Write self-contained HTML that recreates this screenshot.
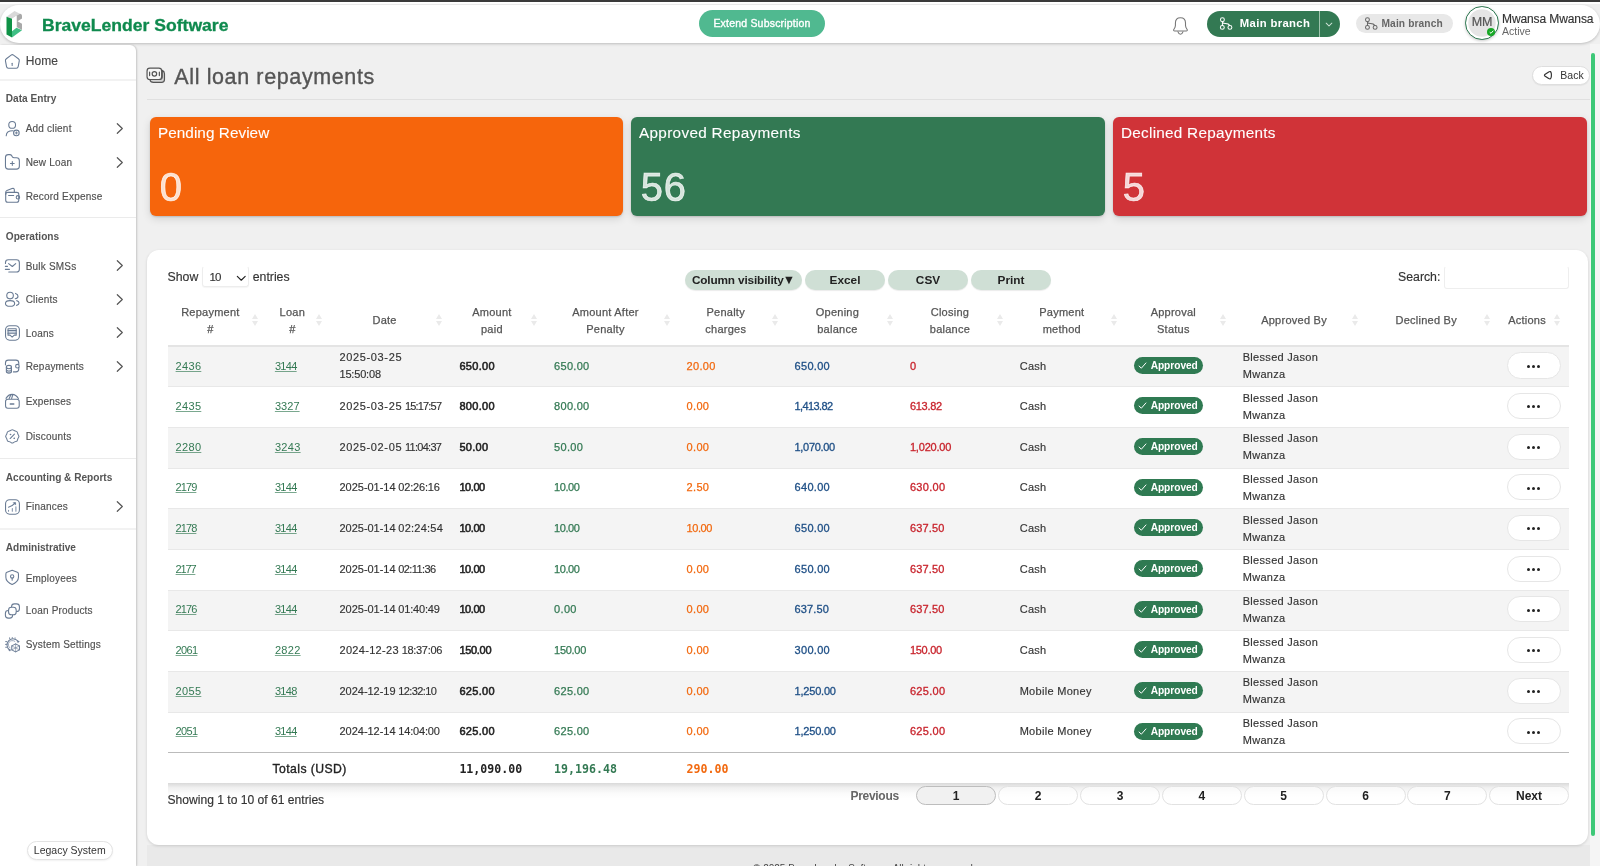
<!DOCTYPE html>
<html lang="en">
<head>
<meta charset="utf-8">
<title>All loan repayments - BraveLender Software</title>
<style>
*{box-sizing:border-box}
html,body{margin:0;padding:0}
body{width:1600px;height:866px;overflow:hidden;position:relative;background:#f0f0f0;font-family:"Liberation Sans",sans-serif;color:#333;font-size:11px}
#app{position:absolute;left:0;top:0;width:1600px;height:866px;overflow:hidden;will-change:transform}
.abs,.ic,.mi,.mh,.md{position:absolute}
#topbar{position:absolute;left:0;top:0;width:1600px;height:2px;background:#3a3a3a}
#topw{position:absolute;left:0;top:2px;width:1600px;height:2px;background:#fff}
#hdr{position:absolute;left:0;top:5px;width:1600px;height:38px;background:#fff;border-radius:19px;box-shadow:0 1px 3px rgba(0,0,0,.22)}
#brand{position:absolute;left:41.500px;top:6.200px;line-height:28px;font-size:16.200px;font-weight:bold;color:#0f8a4e;letter-spacing:0;white-space:nowrap;transform:scaleX(1.085);transform-origin:0 50%;-webkit-text-stroke:.3px #0f8a4e}
#ext{position:absolute;left:699px;top:5px;width:126px;height:27px;border-radius:14px;background:#50b990;color:#fff;font-size:10.500px;text-align:center;line-height:27px;letter-spacing:.2px;-webkit-text-stroke:.35px #fff}
#mb{position:absolute;left:1207px;top:6px;width:133px;height:26px;border-radius:13px;background:#337953;color:#fff;font-size:12px;font-weight:bold;line-height:26px;white-space:nowrap}
#mb b{position:absolute;left:32.800px;top:-.6px;font-weight:bold;font-size:11.300px;letter-spacing:.35px}
#mb s{position:absolute;left:112px;top:0;width:1px;height:26px;background:#9fc4ad}
#mb2{position:absolute;left:1356px;top:9px;width:97px;height:19px;border-radius:10px;background:#e8e8e8;color:#666;font-size:11px;font-weight:bold;line-height:19px;white-space:nowrap}
#mb2 b{position:absolute;left:25.500px;top:.3px;font-size:10.200px;letter-spacing:.12px}
#av{position:absolute;left:1465.200px;top:1.100px;width:33.800px;height:33.800px;border-radius:50%;border:1.700px solid #2f7a52;background:#e5e5e5;color:#555;font-size:12.500px;text-align:center;line-height:30px;-webkit-text-stroke:.2px #555;box-shadow:0 1px 3px rgba(0,0,0,.2),inset 0 0 0 2.300px #fff}
#avd{position:absolute;left:1487px;top:23px;width:8px;height:8px;border-radius:50%;background:#17a825}
#un{position:absolute;left:1502px;top:7px;font-size:12px;line-height:14px;color:#333;white-space:nowrap;letter-spacing:-.1px;-webkit-text-stroke:.15px #333}
#ua{position:absolute;left:1502px;top:20px;font-size:10.500px;line-height:12px;color:#666}
#side{position:absolute;left:0;top:45px;width:136px;height:821px;background:#fff;border-top-right-radius:6px;box-shadow:1px 0 2px rgba(0,0,0,.18)}
#side .ic{margin-top:-45px}
.mi{left:25.700px;height:20px;line-height:20px;font-size:10px;color:#505050;white-space:nowrap;margin-top:-45px;letter-spacing:.2px;-webkit-text-stroke:.15px #505050}
.mi.home{font-size:12px;color:#444;letter-spacing:.1px}
.mh{left:5.800px;height:20px;line-height:20px;font-size:10.100px;font-weight:bold;color:#555;white-space:nowrap;margin-top:-45px;letter-spacing:0}
.md{left:0;width:136px;height:1px;background:#ebebeb;margin-top:-45px}
.md.t{height:2px;background:#f2f2f2}
#legacy{position:absolute;left:27px;top:795.500px;width:85.500px;height:19px;border:1px solid #e3e3e3;border-radius:11px;background:#fff;font-size:10.500px;color:#333;text-align:center;line-height:17px;box-shadow:0 1px 2px rgba(0,0,0,.06)}
#title{position:absolute;left:174.300px;top:62.700px;font-size:21.500px;line-height:28px;color:#555;white-space:nowrap;letter-spacing:.62px;-webkit-text-stroke:.35px #555}
#back{position:absolute;left:1532.300px;top:65.700px;width:58px;height:19.800px;border-radius:10px;background:#fff;border:1px solid #dedede;font-size:10.500px;color:#333;line-height:17px;box-shadow:0 1px 1px rgba(0,0,0,.05)}
#back b{position:absolute;left:27px;font-weight:normal}
#hr{position:absolute;left:147px;top:99px;width:1443px;height:1px;background:#e0e0e0}
.card{position:absolute;top:116.700px;height:99.700px;border-radius:6px;color:#fff;box-shadow:0 1px 2px rgba(0,0,0,.15),0 3px 8px rgba(0,0,0,.12)}
.card h4{position:absolute;left:8px;top:6.600px;margin:0;font-weight:normal;font-size:15.300px;line-height:20px;white-space:nowrap;letter-spacing:.05px;-webkit-text-stroke:.1px #fff}
.card p{position:absolute;left:9.700px;top:47.300px;margin:0;font-size:40px;line-height:46px;color:rgba(255,255,255,.8);letter-spacing:.8px;-webkit-text-stroke:.7px rgba(255,255,255,.8)}
#tc{position:absolute;left:147.300px;top:250px;width:1441.100px;height:595px;background:#fff;border-radius:12px;box-shadow:0 1px 3px rgba(0,0,0,.14)}
#fband{position:absolute;left:147.300px;top:845px;width:1442.500px;height:21px;background:#e9e9e9}
#len{position:absolute;left:167.500px;top:267px;-webkit-text-stroke:.15px;font-size:12.300px;line-height:21px;color:#333;white-space:nowrap}
#sel{position:absolute;left:202px;top:266.200px;width:47px;height:21.300px;border:1px solid #ededed;border-top-color:transparent;border-radius:3px;box-shadow:0 1px 1px rgba(0,0,0,.04)}
#sel b{position:absolute;left:6.500px;top:0;line-height:21px;font-weight:normal;font-size:11.500px;letter-spacing:-.8px;-webkit-text-stroke:.15px}
.btn{position:absolute;top:270px;height:19.500px;border-radius:10px;background:#cfdfd5;color:#222;font-weight:bold;font-size:11.800px;line-height:21px;text-align:center;white-space:nowrap;box-shadow:0 1px 1px rgba(0,0,0,.08)}
#sl{position:absolute;left:1398px;top:267px;-webkit-text-stroke:.15px;font-size:12.300px;line-height:21px;color:#333}
#si{position:absolute;left:1443.500px;top:265.700px;width:125.500px;height:23px;border:1px solid #eee;border-top-color:#fff;border-radius:3px;background:#fff}
table{position:absolute;left:167.6px;top:296px;width:1401.2px;border-collapse:collapse;table-layout:fixed;font-size:11px}
th{height:50px;padding:0 18px 0 4.3px;font-weight:normal;color:#555;-webkit-text-stroke:.25px #555;text-align:center;line-height:16.500px;position:relative;border-bottom:2px solid #e4e4e4;font-size:11px;letter-spacing:.25px}
th i{position:absolute;right:9px;top:17.500px;width:6px;height:13px}
th i:before{content:"";position:absolute;left:0;top:0;border:3px solid transparent;border-bottom:5px solid #eaeaea;border-top:0}
th i:after{content:"";position:absolute;left:0;top:7.500px;border:3px solid transparent;border-top:5px solid #eaeaea;border-bottom:0}
td{height:40.680px;padding:0 8px 1px;line-height:16.800px;color:#333;-webkit-text-stroke:.15px;border-bottom:1px solid #e8e8e8;white-space:nowrap;letter-spacing:.3px}
td.d{letter-spacing:-.3px}
tbody tr:nth-child(odd) td{background:#f4f4f4}
tbody tr:last-child td{border-bottom:1px solid #bbb}
td a{-webkit-text-stroke:0;color:#337953;text-decoration:underline;text-decoration-color:rgba(51,121,83,.65);letter-spacing:.1px}
td.b{color:#222;-webkit-text-stroke:.55px #222}
td.g{color:#337953;-webkit-text-stroke:.25px}td.o{color:#f2690f;-webkit-text-stroke:.25px}td.bl{color:#1e4f86;-webkit-text-stroke:.3px}td.r{color:#c8232c;-webkit-text-stroke:.3px}
.bdg{display:inline-block;height:17px;line-height:17px;border-radius:9px;background:#2f7a52;color:#fff;font-weight:bold;font-size:10.200px;padding:0 5px 0 4.500px;letter-spacing:-.05px;position:relative;top:-.8px;-webkit-text-stroke:0}
.bdg svg{margin-right:3.500px;vertical-align:-1px}
.act{display:block;width:53.500px;height:26.200px;margin-top:-1px;border:1px solid #e6e6e6;border-radius:14px;background:#fff;text-align:center;line-height:0;padding-top:10.500px}
.act u{display:inline-block;width:3.200px;height:3.200px;border-radius:50%;background:#222;margin:0 .9px}
tfoot td{height:30.400px;border-bottom:0;font-weight:bold;font-size:12px;color:#222;letter-spacing:.1px;padding-top:3px;-webkit-text-stroke:0}
tfoot td.m{font-family:"DejaVu Sans Mono","Liberation Mono",monospace;font-size:11.600px;letter-spacing:0;-webkit-text-stroke:0}
#tshadow{position:absolute;left:167.600px;top:783px;width:1401.200px;height:16px;background:linear-gradient(rgba(0,0,0,.15),rgba(0,0,0,.06) 30%,rgba(0,0,0,.015) 65%,rgba(0,0,0,0))}
#info{position:absolute;left:167.500px;top:790px;-webkit-text-stroke:.15px;font-size:12.100px;line-height:20px;color:#333;white-space:nowrap;letter-spacing:0}
#prev{position:absolute;left:850.500px;top:785.500px;font-size:12px;line-height:20px;color:#666;font-weight:bold;letter-spacing:-.3px}
.pg{position:absolute;top:785.500px;width:80px;height:19.500px;font-weight:bold;border:1px solid #e2e2e2;border-radius:10px;text-align:center;font-size:12px;line-height:18px;color:#222;background:rgba(255,255,255,.6)}
.pg.cur{border-color:#bdbdbd;background:#f1f1f1}
#sbt{position:absolute;left:1589.800px;top:44px;width:10.200px;height:822px;background:#f5f5f5}
#sb{position:absolute;left:1590.600px;top:53px;width:4.200px;height:783.300px;border-radius:2px;background:#3ec878}
#foot{position:absolute;left:753px;top:862.500px;white-space:nowrap;font-size:10px;color:#444}
</style>
</head>
<body>
<div id="app">
<div id="topbar"></div><div id="topw"></div>
<header id="hdr">
<svg class="abs" style="left:5.200px;top:3.700px" width="18" height="29.100" viewBox="0 0 18 28" preserveAspectRatio="none"><path d="M1.500 7.500 9.500 2 15 4.500 7 9.500z" fill="#d9d9d9"/><path d="M11.500 6.500 15 4.500c1.500 0 2 1 2 2.200v2.500l-4.500 2.600 4.500 2.500v6l-5.500-3z" fill="#a9a9a9"/><path d="M7 9.500l4.500-3V18L7 21z" fill="#fff"/><path d="M1.500 7.500 7 9.500v18L1.500 24.500z" fill="#0f9246"/><path d="M7 21.500l4.500-3.500 5.500 2.500L7 27.500z" fill="#3fbf84"/></svg>
<div id="brand">BraveLender Software</div>
<div id="ext">Extend Subscription</div>
<svg class="abs" style="left:1165px;top:5px" width="48" height="26" viewBox="0 0 1599 866" fill="none" stroke="#777" stroke-width="36" stroke-linejoin="round" stroke-linecap="round"><path d="M515 257C400 257 347 332 347 432V520C347 570 322 610 292 650C277 675 292 702 322 702H708C738 702 753 675 738 650C708 610 683 570 683 520V432C683 332 630 257 515 257Z"/><path d="M432 727Q462 808 515 808Q568 808 598 727"/></svg>
<div id="mb"><svg class="abs" style="left:-2px;top:-1px" width="48" height="26" viewBox="0 0 1599 866" fill="none" stroke="#fff" stroke-width="34" stroke-linecap="round"><circle cx="580" cy="325" r="65"/><circle cx="577" cy="580" r="65"/><circle cx="830" cy="580" r="65"/><path d="M580 392V513M588 415Q600 447 680 447Q790 447 820 515"/></svg><b>Main branch</b><s></s><svg class="abs" style="left:118px;top:10.500px" width="8" height="5.600" viewBox="0 0 10 7" fill="none" stroke="#cfe3d7" stroke-width="1.300" stroke-linecap="round" stroke-linejoin="round"><path d="M1.500 1.500 5 5l3.500-3.500"/></svg></div>
<div id="mb2"><svg class="abs" style="left:-4px;top:-4px" width="48" height="26" viewBox="0 0 1599 866" fill="none" stroke="#666" stroke-width="34" stroke-linecap="round"><circle cx="515" cy="325" r="65"/><circle cx="515" cy="580" r="65"/><circle cx="770" cy="580" r="65"/><path d="M515 392V513M523 415Q535 447 615 447Q725 447 755 515"/></svg><b>Main branch</b></div>
<div id="av">MM</div><div id="avd"><svg class="abs" style="left:1.500px;top:2px" width="5" height="4" viewBox="0 0 5 4" fill="none" stroke="#fff" stroke-width="1"><path d="M.7 2.200 2 3.300 4.300.7"/></svg></div>
<div id="un">Mwansa Mwansa</div><div id="ua">Active</div>
</header>
<nav id="side">
<svg class="ic" style="left:0;top:48px;width:48px;height:26px" viewBox="0 0 1599 866" fill="none" stroke="#697b94" stroke-width="36" stroke-linecap="round" stroke-linejoin="round"><path d="M370 237Q410 207 450 237L612 357Q652 387 642 432L606 622Q596 672 546 672H278Q228 672 218 622L182 432Q172 387 212 357Z"/><path d="M405 508V585"/></svg>
<div class="mi home" style="top:51.199999999999996px">Home</div>
<div class="md t" style="top:79px"></div>
<div class="mh" style="top:88.8px">Data Entry</div>
<svg class="ic" style="left:0;top:115px;width:48px;height:26px" viewBox="0 0 1599 866" fill="none" stroke="#697b94" stroke-width="36" stroke-linecap="round" stroke-linejoin="round"><circle cx="405" cy="330" r="113"/><path d="M207 688C212 585 300 520 432 522"/><circle cx="545" cy="597" r="93"/><path d="M545 560V634M508 597H582" stroke-width="30"/></svg>
<div class="mi" style="top:119.4px">Add client</div>
<svg class="ic" style="left:114px;top:122.1px;width:11px;height:13px" viewBox="0 0 11 13" fill="none" stroke="#555" stroke-width="1.200" stroke-linecap="round" stroke-linejoin="round"><path d="M3.300 1.700 8.300 6.500 3.300 11.300"/></svg>
<svg class="ic" style="left:0;top:149px;width:48px;height:26px" viewBox="0 0 1599 866" fill="none" stroke="#697b94" stroke-width="36" stroke-linecap="round" stroke-linejoin="round"><path d="M182 285Q182 187 277 187H322Q372 187 392 225L408 255Q428 292 475 292H548Q645 292 645 388V572Q645 670 548 670H277Q182 670 182 572Z"/><path d="M410 420V545M348 482H473"/></svg>
<div class="mi" style="top:152.9px">New Loan</div>
<svg class="ic" style="left:114px;top:155.5px;width:11px;height:13px" viewBox="0 0 11 13" fill="none" stroke="#555" stroke-width="1.200" stroke-linecap="round" stroke-linejoin="round"><path d="M3.300 1.700 8.300 6.500 3.300 11.300"/></svg>
<svg class="ic" style="left:0;top:182px;width:48px;height:26px" viewBox="0 0 1599 866" fill="none" stroke="#697b94" stroke-width="36" stroke-linecap="round" stroke-linejoin="round"><path d="M190 410Q190 345 258 345H558Q625 345 625 410V605Q625 672 558 672H258Q190 672 190 605Z"/><path d="M190 415V345Q190 300 232 283L400 218Q475 195 477 262V345"/><path d="M287 450H455"/><circle cx="597" cy="512" r="57"/></svg>
<div class="mi" style="top:186.6px">Record Expense</div>
<div class="md" style="top:217.3px"></div>
<div class="mh" style="top:226.8px">Operations</div>
<svg class="ic" style="left:0;top:253px;width:48px;height:26px" viewBox="0 0 1599 866" fill="none" stroke="#697b94" stroke-width="36" stroke-linecap="round" stroke-linejoin="round"><path d="M182 350V322Q182 227 277 227H550Q645 227 645 322V540Q645 635 550 635H292"/><path d="M287 352L410 450L523 352"/><path d="M178 445H250M178 545H315"/></svg>
<div class="mi" style="top:256.9px">Bulk SMSs</div>
<svg class="ic" style="left:114px;top:259.1px;width:11px;height:13px" viewBox="0 0 11 13" fill="none" stroke="#555" stroke-width="1.200" stroke-linecap="round" stroke-linejoin="round"><path d="M3.300 1.700 8.300 6.500 3.300 11.300"/></svg>
<svg class="ic" style="left:0;top:286px;width:48px;height:26px" viewBox="0 0 1599 866" fill="none" stroke="#697b94" stroke-width="36" stroke-linecap="round" stroke-linejoin="round"><circle cx="335" cy="320" r="110"/><ellipse cx="335" cy="582" rx="153" ry="95"/><path d="M517 247Q600 272 600 340Q600 408 507 425"/><path d="M557 487Q635 512 635 570Q635 625 552 645"/></svg>
<div class="mi" style="top:290.4px">Clients</div>
<svg class="ic" style="left:114px;top:293.0px;width:11px;height:13px" viewBox="0 0 11 13" fill="none" stroke="#555" stroke-width="1.200" stroke-linecap="round" stroke-linejoin="round"><path d="M3.300 1.700 8.300 6.500 3.300 11.300"/></svg>
<svg class="ic" style="left:0;top:320px;width:48px;height:26px" viewBox="0 0 1599 866" fill="none" stroke="#697b94" stroke-width="36" stroke-linecap="round" stroke-linejoin="round"><rect x="185" y="190" width="462" height="482" rx="135"/><path d="M267 350H540V440H267Z" fill="#cfd7e2" stroke="none"/><path d="M267 292H540V505H475L405 568L335 505H267Z"/><path d="M267 350H540M267 440H540"/></svg>
<div class="mi" style="top:323.5px">Loans</div>
<svg class="ic" style="left:114px;top:326.1px;width:11px;height:13px" viewBox="0 0 11 13" fill="none" stroke="#555" stroke-width="1.200" stroke-linecap="round" stroke-linejoin="round"><path d="M3.300 1.700 8.300 6.500 3.300 11.300"/></svg>
<svg class="ic" style="left:0;top:353px;width:48px;height:26px" viewBox="0 0 1599 866" fill="none" stroke="#697b94" stroke-width="36" stroke-linecap="round" stroke-linejoin="round"><path d="M182 395V332Q182 237 277 237H530Q625 237 625 332V372"/><circle cx="580" cy="440" r="60"/><path d="M625 478V530Q625 628 530 630H447"/><ellipse cx="297" cy="468" rx="85" ry="55"/><path d="M212 470V618Q212 672 297 672Q382 672 382 618V470"/><path d="M212 545Q212 600 297 600Q382 600 382 545" stroke-width="30"/><path d="M235 635H360" stroke-width="30"/></svg>
<div class="mi" style="top:357.2px">Repayments</div>
<svg class="ic" style="left:114px;top:359.6px;width:11px;height:13px" viewBox="0 0 11 13" fill="none" stroke="#555" stroke-width="1.200" stroke-linecap="round" stroke-linejoin="round"><path d="M3.300 1.700 8.300 6.500 3.300 11.300"/></svg>
<svg class="ic" style="left:0;top:388px;width:48px;height:26px" viewBox="0 0 1599 866" fill="none" stroke="#697b94" stroke-width="36" stroke-linecap="round" stroke-linejoin="round"><path d="M185 452Q185 377 262 377H560Q640 377 640 452V590Q640 672 560 672H262Q185 672 185 590Z"/><path d="M200 345Q275 215 405 212Q535 215 612 350"/><path d="M305 350L360 232M387 350L425 227"/><path d="M342 535H460" stroke-width="46"/></svg>
<div class="mi" style="top:391.7px">Expenses</div>
<svg class="ic" style="left:0;top:423px;width:48px;height:26px" viewBox="0 0 1599 866" fill="none" stroke="#697b94" stroke-width="36" stroke-linecap="round" stroke-linejoin="round"><path d="M373 237Q410 210 447 237Q485 265 530 272Q576 279 583 325Q590 370 618 408Q645 445 618 482Q590 520 583 565Q576 611 530 618Q485 625 447 653Q410 680 373 653Q335 625 290 618Q244 611 237 565Q230 520 202 482Q175 445 202 408Q230 370 237 325Q244 279 290 272Q335 265 373 237Z"/><path d="M337 518L480 372"/><circle cx="345" cy="382" r="12" stroke-width="30"/><circle cx="470" cy="508" r="12" stroke-width="30"/></svg>
<div class="mi" style="top:426.9px">Discounts</div>
<div class="md" style="top:458px"></div>
<div class="mh" style="top:467.5px">Accounting &amp; Reports</div>
<svg class="ic" style="left:0;top:494px;width:48px;height:26px" viewBox="0 0 1599 866" fill="none" stroke="#697b94" stroke-width="36" stroke-linecap="round" stroke-linejoin="round"><rect x="185" y="190" width="462" height="482" rx="135"/><path d="M285 540V575M410 482V575M530 425V575" stroke-width="34" stroke="#7b8ca5"/><path d="M282 440Q420 400 500 305"/><path d="M452 287H520V355Z" fill="#5f7492" stroke-width="20"/></svg>
<div class="mi" style="top:497.4px">Finances</div>
<svg class="ic" style="left:114px;top:500.3px;width:11px;height:13px" viewBox="0 0 11 13" fill="none" stroke="#555" stroke-width="1.200" stroke-linecap="round" stroke-linejoin="round"><path d="M3.300 1.700 8.300 6.500 3.300 11.300"/></svg>
<div class="md t" style="top:528px"></div>
<div class="mh" style="top:538px">Administrative</div>
<svg class="ic" style="left:0;top:564px;width:48px;height:26px" viewBox="0 0 1599 866" fill="none" stroke="#697b94" stroke-width="36" stroke-linecap="round" stroke-linejoin="round"><path d="M405 212L232 275Q195 290 195 332V440Q195 520 250 575Q320 645 405 682Q490 645 560 575Q615 520 615 440V332Q615 290 578 275Z"/><circle cx="405" cy="415" r="55"/><path d="M405 470V538"/></svg>
<div class="mi" style="top:568.6px">Employees</div>
<svg class="ic" style="left:0;top:598px;width:48px;height:26px" viewBox="0 0 1599 866" fill="none" stroke="#697b94" stroke-width="36" stroke-linecap="round" stroke-linejoin="round"><rect x="385" y="195" width="262" height="257" rx="95"/><rect x="180" y="415" width="240" height="255" rx="95"/><rect x="285" y="310" width="255" height="250" rx="95" fill="#fff"/></svg>
<div class="mi" style="top:601.4px">Loan Products</div>
<svg class="ic" style="left:0;top:631px;width:48px;height:26px" viewBox="0 0 1599 866" fill="none" stroke="#697b94" stroke-width="36" stroke-linecap="round" stroke-linejoin="round"><path d="M335 640A203 203 0 1 1 612 362" stroke-width="34"/><path d="M175 352H240M170 447H236M175 542H244M318 215V262M410 205V250M502 215V262" stroke-width="30" stroke-linecap="butt"/><path d="M585 318L650 350L590 385Z" fill="#697b94" stroke-width="10"/><path d="M290 640L335 672L345 615Z" fill="#697b94" stroke-width="10"/><path d="M330 560A130 130 0 0 1 495 345" stroke-width="28" stroke="#8d9bb1"/><path d="M520 428L648 497V628L520 695L392 628V497Z" fill="#fff" stroke-width="34"/><path d="M520 428V695M392 497L648 628M648 497L392 628" stroke-width="20"/></svg>
<div class="mi" style="top:635.4px">System Settings</div>
<div id="legacy">Legacy System</div>
</nav>
<main>
<svg class="abs" style="left:140px;top:60px" width="48" height="26" viewBox="0 0 1599 866" fill="none" stroke="#555" stroke-width="40" stroke-linecap="round" stroke-linejoin="round"><path d="M330 650Q350 745 445 745H720Q815 745 815 650V460Q815 380 740 345V560Q740 650 640 650Z" fill="#d4d4d4"/><rect x="235" y="270" width="487" height="380" rx="95" fill="#f6f6f6"/><circle cx="480" cy="460" r="75"/><path d="M320 405V520M645 405V520"/></svg>
<h1 id="title" style="margin:0;font-weight:normal">All loan repayments</h1>
<div id="back"><svg class="abs" style="left:-5.300px;top:-4.700px" width="48" height="26" viewBox="0 0 1599 866" fill="none" stroke="#333" stroke-width="40" stroke-linejoin="round"><path d="M560 415Q535 440 560 465L690 550Q760 590 775 500Q785 440 775 375Q760 290 690 330Z"/></svg><b>Back</b></div>
<div id="hr"></div>
<section class="card" style="left:150px;width:473px;background:#f6650c"><h4>Pending Review</h4><p>0</p></section>
<section class="card" style="left:631px;width:474px;background:#337953"><h4 style="letter-spacing:.32px">Approved Repayments</h4><p>56</p></section>
<section class="card" style="left:1113px;width:474px;background:#d03338"><h4 style="letter-spacing:.26px">Declined Repayments</h4><p>5</p></section>
<div id="fband"></div>
<div id="tc"></div>
<div id="len">Show <span style="display:inline-block;width:47.600px"></span> entries</div>
<div id="sel"><b>10</b><svg class="abs" style="left:32.500px;top:7.500px" width="10.500" height="7" viewBox="0 0 12 8" fill="none" stroke="#222" stroke-width="1.300" stroke-linecap="round" stroke-linejoin="round"><path d="M1.500 1.500 6 6l4.500-4.500"/></svg></div>
<div class="btn" style="left:685px;width:117px;letter-spacing:-.15px">Column visibility<span style="font-size:12.500px;letter-spacing:0;margin-left:-1px">&#9660;</span></div>
<div class="btn" style="left:805px;width:80px">Excel</div>
<div class="btn" style="left:888px;width:80px">CSV</div>
<div class="btn" style="left:971px;width:80px">Print</div>
<div id="sl">Search:</div><div id="si"></div>
<table>
<colgroup><col style="width:99.3px"><col style="width:64.6px"><col style="width:119.9px"><col style="width:94.7px"><col style="width:132.5px"><col style="width:108px"><col style="width:115.4px"><col style="width:109.7px"><col style="width:114px"><col style="width:109.1px"><col style="width:132.3px"><col style="width:132px"><col style="width:69.7px"></colgroup>
<thead><tr><th><span>Repayment<br>#</span><i></i></th><th><span>Loan<br>#</span><i></i></th><th><span>Date</span><i></i></th><th><span>Amount<br>paid</span><i></i></th><th><span>Amount After<br>Penalty</span><i></i></th><th><span>Penalty<br>charges</span><i></i></th><th><span>Opening<br>balance</span><i></i></th><th><span>Closing<br>balance</span><i></i></th><th><span>Payment<br>method</span><i></i></th><th><span>Approval<br>Status</span><i></i></th><th><span>Approved By</span><i></i></th><th><span>Declined By</span><i></i></th><th><span>Actions</span><i></i></th></tr></thead>
<tbody>
<tr><td><a style="letter-spacing:0.31px">2436</a></td><td><a style="letter-spacing:-0.68px">3144</a></td><td class="d"><span style="letter-spacing:0.64px">2025-03-25</span><br><span style="letter-spacing:-0.18px">15:50:08</span></td><td class="b" style="letter-spacing:0.30px">650.00</td><td class="g" style="letter-spacing:0.30px">650.00</td><td class="o" style="letter-spacing:0.31px">20.00</td><td class="bl" style="letter-spacing:0.30px">650.00</td><td class="r">0</td><td>Cash</td><td><span class="bdg"><svg viewBox="0 0 10 10" width="9" height="9" fill="none" stroke="#fff" stroke-width="1.100" stroke-linecap="round" stroke-linejoin="round"><path d="M1.200 5.600 3.700 8 8.800 2.200"/></svg>Approved</span></td><td>Blessed Jason<br>Mwanza</td><td></td><td><span class="act"><u></u><u></u><u></u></span></td></tr>
<tr><td><a style="letter-spacing:0.31px">2435</a></td><td><a style="letter-spacing:0.06px">3327</a></td><td class="d"><span style="letter-spacing:0.64px">2025-03-25</span> <span style="letter-spacing:-0.82px">15:17:57</span></td><td class="b" style="letter-spacing:0.30px">800.00</td><td class="g" style="letter-spacing:0.30px">800.00</td><td class="o" style="letter-spacing:0.34px">0.00</td><td class="bl" style="letter-spacing:-0.62px">1,413.82</td><td class="r" style="letter-spacing:-0.29px">613.82</td><td>Cash</td><td><span class="bdg"><svg viewBox="0 0 10 10" width="9" height="9" fill="none" stroke="#fff" stroke-width="1.100" stroke-linecap="round" stroke-linejoin="round"><path d="M1.200 5.600 3.700 8 8.800 2.200"/></svg>Approved</span></td><td>Blessed Jason<br>Mwanza</td><td></td><td><span class="act"><u></u><u></u><u></u></span></td></tr>
<tr><td><a style="letter-spacing:0.31px">2280</a></td><td><a style="letter-spacing:0.31px">3243</a></td><td class="d"><span style="letter-spacing:0.64px">2025-02-05</span> <span style="letter-spacing:-0.71px">11:04:37</span></td><td class="b" style="letter-spacing:0.31px">50.00</td><td class="g" style="letter-spacing:0.31px">50.00</td><td class="o" style="letter-spacing:0.34px">0.00</td><td class="bl" style="letter-spacing:-0.31px">1,070.00</td><td class="r" style="letter-spacing:-0.20px">1,020.00</td><td>Cash</td><td><span class="bdg"><svg viewBox="0 0 10 10" width="9" height="9" fill="none" stroke="#fff" stroke-width="1.100" stroke-linecap="round" stroke-linejoin="round"><path d="M1.200 5.600 3.700 8 8.800 2.200"/></svg>Approved</span></td><td>Blessed Jason<br>Mwanza</td><td></td><td><span class="act"><u></u><u></u><u></u></span></td></tr>
<tr><td><a style="letter-spacing:-0.93px">2179</a></td><td><a style="letter-spacing:-0.68px">3144</a></td><td class="d"><span style="letter-spacing:-0.02px">2025-01-14</span> <span style="letter-spacing:-0.18px">02:26:16</span></td><td class="b" style="letter-spacing:-0.42px">10.00</td><td class="g" style="letter-spacing:-0.42px">10.00</td><td class="o" style="letter-spacing:0.34px">2.50</td><td class="bl" style="letter-spacing:0.30px">640.00</td><td class="r" style="letter-spacing:0.30px">630.00</td><td>Cash</td><td><span class="bdg"><svg viewBox="0 0 10 10" width="9" height="9" fill="none" stroke="#fff" stroke-width="1.100" stroke-linecap="round" stroke-linejoin="round"><path d="M1.200 5.600 3.700 8 8.800 2.200"/></svg>Approved</span></td><td>Blessed Jason<br>Mwanza</td><td></td><td><span class="act"><u></u><u></u><u></u></span></td></tr>
<tr><td><a style="letter-spacing:-0.93px">2178</a></td><td><a style="letter-spacing:-0.68px">3144</a></td><td class="d"><span style="letter-spacing:-0.02px">2025-01-14</span> <span style="letter-spacing:0.24px">02:24:54</span></td><td class="b" style="letter-spacing:-0.42px">10.00</td><td class="g" style="letter-spacing:-0.42px">10.00</td><td class="o" style="letter-spacing:-0.42px">10.00</td><td class="bl" style="letter-spacing:0.30px">650.00</td><td class="r" style="letter-spacing:0.15px">637.50</td><td>Cash</td><td><span class="bdg"><svg viewBox="0 0 10 10" width="9" height="9" fill="none" stroke="#fff" stroke-width="1.100" stroke-linecap="round" stroke-linejoin="round"><path d="M1.200 5.600 3.700 8 8.800 2.200"/></svg>Approved</span></td><td>Blessed Jason<br>Mwanza</td><td></td><td><span class="act"><u></u><u></u><u></u></span></td></tr>
<tr><td><a style="letter-spacing:-1.18px">2177</a></td><td><a style="letter-spacing:-0.68px">3144</a></td><td class="d"><span style="letter-spacing:-0.02px">2025-01-14</span> <span style="letter-spacing:-0.61px">02:11:36</span></td><td class="b" style="letter-spacing:-0.42px">10.00</td><td class="g" style="letter-spacing:-0.42px">10.00</td><td class="o" style="letter-spacing:0.34px">0.00</td><td class="bl" style="letter-spacing:0.30px">650.00</td><td class="r" style="letter-spacing:0.15px">637.50</td><td>Cash</td><td><span class="bdg"><svg viewBox="0 0 10 10" width="9" height="9" fill="none" stroke="#fff" stroke-width="1.100" stroke-linecap="round" stroke-linejoin="round"><path d="M1.200 5.600 3.700 8 8.800 2.200"/></svg>Approved</span></td><td>Blessed Jason<br>Mwanza</td><td></td><td><span class="act"><u></u><u></u><u></u></span></td></tr>
<tr><td><a style="letter-spacing:-0.93px">2176</a></td><td><a style="letter-spacing:-0.68px">3144</a></td><td class="d"><span style="letter-spacing:-0.02px">2025-01-14</span> <span style="letter-spacing:-0.18px">01:40:49</span></td><td class="b" style="letter-spacing:-0.42px">10.00</td><td class="g" style="letter-spacing:0.34px">0.00</td><td class="o" style="letter-spacing:0.34px">0.00</td><td class="bl" style="letter-spacing:0.15px">637.50</td><td class="r" style="letter-spacing:0.15px">637.50</td><td>Cash</td><td><span class="bdg"><svg viewBox="0 0 10 10" width="9" height="9" fill="none" stroke="#fff" stroke-width="1.100" stroke-linecap="round" stroke-linejoin="round"><path d="M1.200 5.600 3.700 8 8.800 2.200"/></svg>Approved</span></td><td>Blessed Jason<br>Mwanza</td><td></td><td><span class="act"><u></u><u></u><u></u></span></td></tr>
<tr><td><a style="letter-spacing:-0.68px">2061</a></td><td><a style="letter-spacing:0.31px">2822</a></td><td class="d"><span style="letter-spacing:0.31px">2024-12-23</span> <span style="letter-spacing:-0.29px">18:37:06</span></td><td class="b" style="letter-spacing:-0.29px">150.00</td><td class="g" style="letter-spacing:-0.29px">150.00</td><td class="o" style="letter-spacing:0.34px">0.00</td><td class="bl" style="letter-spacing:0.30px">300.00</td><td class="r" style="letter-spacing:-0.29px">150.00</td><td>Cash</td><td><span class="bdg"><svg viewBox="0 0 10 10" width="9" height="9" fill="none" stroke="#fff" stroke-width="1.100" stroke-linecap="round" stroke-linejoin="round"><path d="M1.200 5.600 3.700 8 8.800 2.200"/></svg>Approved</span></td><td>Blessed Jason<br>Mwanza</td><td></td><td><span class="act"><u></u><u></u><u></u></span></td></tr>
<tr><td><a style="letter-spacing:0.31px">2055</a></td><td><a style="letter-spacing:-0.68px">3148</a></td><td class="d"><span style="letter-spacing:-0.02px">2024-12-19</span> <span style="letter-spacing:-0.61px">12:32:10</span></td><td class="b" style="letter-spacing:0.30px">625.00</td><td class="g" style="letter-spacing:0.30px">625.00</td><td class="o" style="letter-spacing:0.34px">0.00</td><td class="bl" style="letter-spacing:-0.20px">1,250.00</td><td class="r" style="letter-spacing:0.30px">625.00</td><td>Mobile Money</td><td><span class="bdg"><svg viewBox="0 0 10 10" width="9" height="9" fill="none" stroke="#fff" stroke-width="1.100" stroke-linecap="round" stroke-linejoin="round"><path d="M1.200 5.600 3.700 8 8.800 2.200"/></svg>Approved</span></td><td>Blessed Jason<br>Mwanza</td><td></td><td><span class="act"><u></u><u></u><u></u></span></td></tr>
<tr><td><a style="letter-spacing:-0.68px">2051</a></td><td><a style="letter-spacing:-0.68px">3144</a></td><td class="d"><span style="letter-spacing:-0.02px">2024-12-14</span> <span style="letter-spacing:-0.18px">14:04:00</span></td><td class="b" style="letter-spacing:0.30px">625.00</td><td class="g" style="letter-spacing:0.30px">625.00</td><td class="o" style="letter-spacing:0.34px">0.00</td><td class="bl" style="letter-spacing:-0.20px">1,250.00</td><td class="r" style="letter-spacing:0.30px">625.00</td><td>Mobile Money</td><td><span class="bdg"><svg viewBox="0 0 10 10" width="9" height="9" fill="none" stroke="#fff" stroke-width="1.100" stroke-linecap="round" stroke-linejoin="round"><path d="M1.200 5.600 3.700 8 8.800 2.200"/></svg>Approved</span></td><td>Blessed Jason<br>Mwanza</td><td></td><td><span class="act"><u></u><u></u><u></u></span></td></tr>
</tbody>
<tfoot><tr><td></td><td colspan="2" style="padding-left:5.500px;font-weight:normal;font-size:12.200px;letter-spacing:.45px;-webkit-text-stroke:.35px #222">Totals (USD)</td><td class="m">11,090.00</td><td class="m g">19,196.48</td><td class="m o">290.00</td><td colspan="7"></td></tr></tfoot>
</table>
<div id="tshadow"></div>
<div id="info">Showing 1 to 10 of 61 entries</div>
<div id="prev">Previous</div>
<span class="pg cur" style="left:916.2px">1</span><span class="pg" style="left:998.1px">2</span><span class="pg" style="left:1080.0px">3</span><span class="pg" style="left:1161.8px">4</span><span class="pg" style="left:1243.7px">5</span><span class="pg" style="left:1325.5px">6</span><span class="pg" style="left:1407.3px">7</span>
<span class="pg" style="left:1489px">Next</span>
<div id="sbt"></div><div id="sb"></div>
<footer id="foot">&copy; 2025 BraveLender Software. All rights reserved.</footer>
</main>
</div>
</body>
</html>
